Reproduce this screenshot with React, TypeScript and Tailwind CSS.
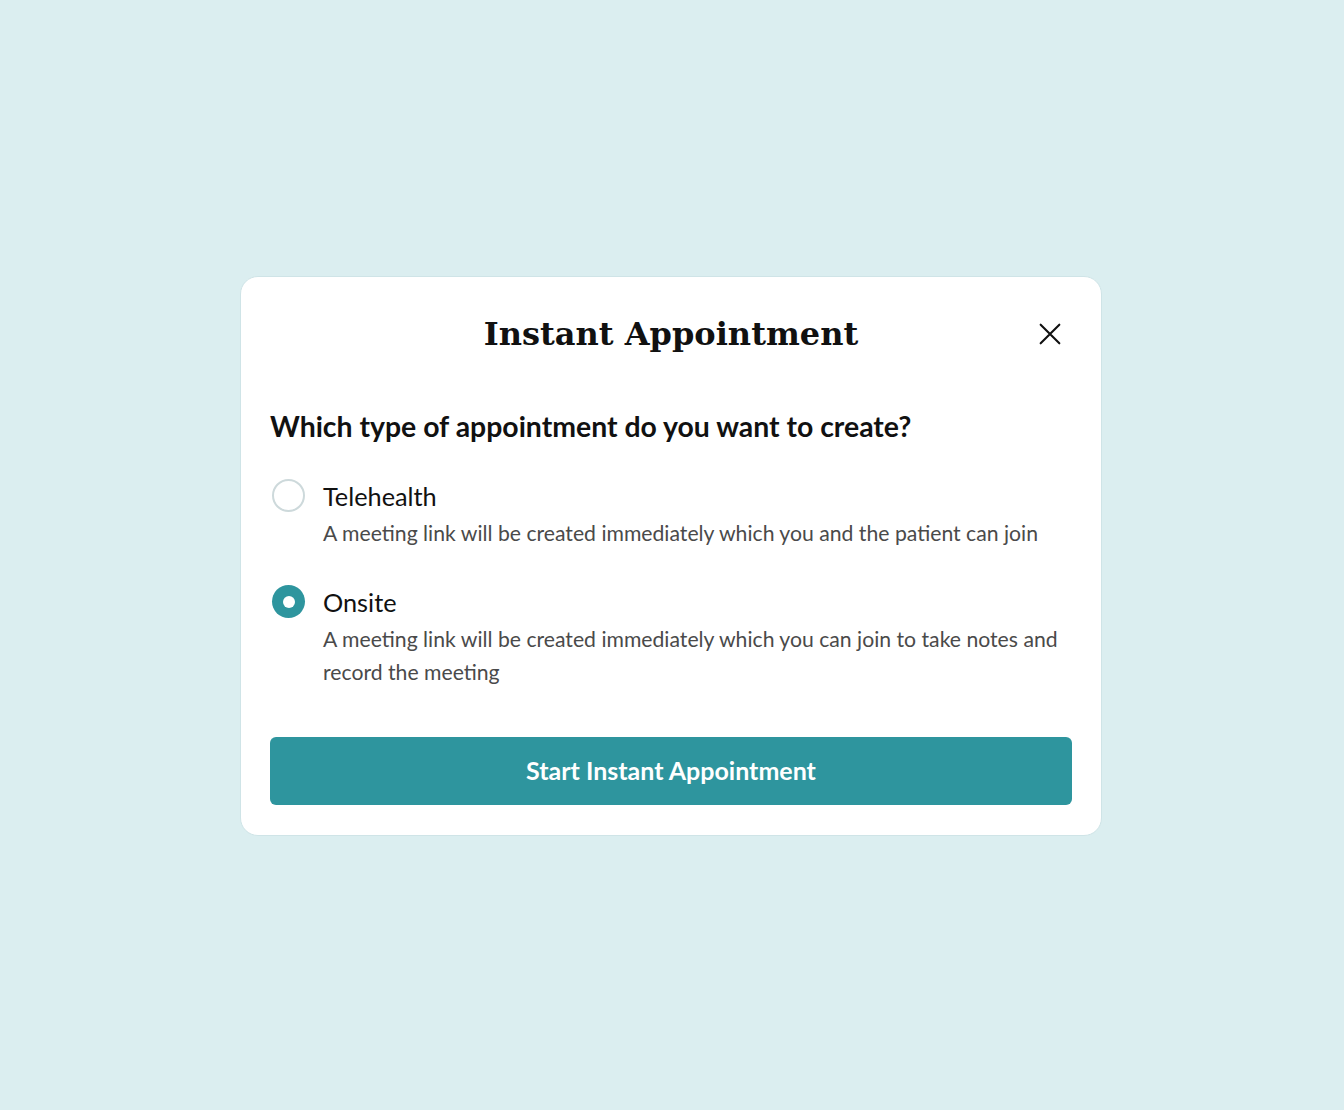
import React from "react";

export default function App() {
  return (
    <div className="min-h-[1110px] w-full bg-[#dbeef0] flex items-start justify-center pt-[276px] pr-[2px]" style={{ fontFamily: '"Lato", "Noto Sans", sans-serif' }}>
      <div className="w-[862px] bg-white rounded-[18px] border border-[#cfe4e7] px-[29px] pt-[28px] pb-[30px]">
        <div className="relative flex items-center justify-center h-[58px]">
          <h1 className="text-[32px] font-bold text-[#111]" style={{ fontFamily: '"DejaVu Serif", "Liberation Serif", serif' }}>
            Instant Appointment
          </h1>
          <button className="absolute right-[8px] top-1/2 -translate-y-1/2 text-[#111]">
            <svg width="28" height="28" viewBox="0 0 24 24" fill="none" stroke="currentColor" strokeWidth="1.8" strokeLinecap="round">
              <path d="M4 4L20 20M20 4L4 20" />
            </svg>
          </button>
        </div>
        <h2 className="mt-[46px] text-[28.4px] font-bold text-[#111] leading-[34px]">
          Which type of appointment do you want to create?
        </h2>
        <div className="mt-[34px] flex flex-col gap-[33px]">
          <div className="flex gap-[18px]">
            <div className="w-[33px] h-[33px] rounded-full border-2 border-[#cdd9db] bg-white shrink-0 mt-[2px] ml-[2px]" />
            <div className="flex flex-col">
              <div className="text-[25.3px] text-[#111] leading-[38px]">Telehealth</div>
              <div className="text-[21.2px] text-[#4a4a4a] leading-[33px] mt-[2px]">
                A meeting link will be created immediately which you and the patient can join
              </div>
            </div>
          </div>
          <div className="flex gap-[18px]">
            <div className="w-[33px] h-[33px] rounded-full bg-[#2e959e] shrink-0 mt-[2px] ml-[2px] flex items-center justify-center">
              <div className="w-[12px] h-[12px] rounded-full bg-white" />
            </div>
            <div className="flex flex-col">
              <div className="text-[25.3px] text-[#111] leading-[38px]">Onsite</div>
              <div className="text-[21.2px] text-[#4a4a4a] leading-[33px] mt-[2px]">
                A meeting link will be created immediately which you can join to take notes and record the meeting
              </div>
            </div>
          </div>
        </div>
        <button className="mt-[48px] w-full h-[68px] rounded-[6px] bg-[#2e959e] text-white text-[25px] font-bold">
          Start Instant Appointment
        </button>
      </div>
    </div>
  );
}
